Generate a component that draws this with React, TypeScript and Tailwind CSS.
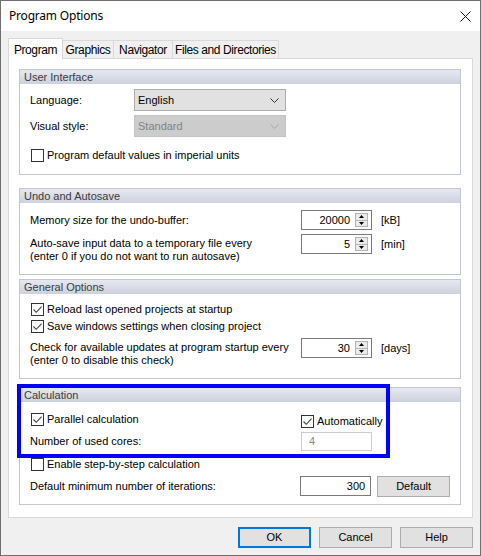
import React from "react";

function Check({ checked }: { checked?: boolean }) {
  return (
    <span className="w-[13px] h-[13px] border border-[#333333] bg-white flex items-center justify-center shrink-0">
      {checked && (
        <svg width="11" height="11" viewBox="0 0 11 11">
          <path d="M1.5 5.5L4.2 8.3L9.6 2.6" stroke="#444444" strokeWidth="1.1" fill="none" />
        </svg>
      )}
    </span>
  );
}

function CheckRow({ checked, label, className = "" }: { checked?: boolean; label: string; className?: string }) {
  return (
    <div className={"flex items-center gap-[3px] h-[13px] ml-px " + className}>
      <Check checked={checked} />
      <span className="leading-[13px] whitespace-nowrap">{label}</span>
    </div>
  );
}

function Spin({ value }: { value: string }) {
  return (
    <div className="w-[71px] h-[20px] border border-[#7a7a7a] bg-white flex items-center shrink-0">
      <span className="flex-1 text-right pr-[5px]">{value}</span>
      <div className="w-[13px] h-[14px] mr-[3px] flex flex-col">
        <div className="flex-1 border border-[#b5b5b5] bg-[#ebebeb] flex items-center justify-center">
          <svg width="5" height="3" viewBox="0 0 5 3">
            <path d="M0 3L2.5 0L5 3Z" fill="#000" />
          </svg>
        </div>
        <div className="flex-1 border border-t-0 border-[#b5b5b5] bg-[#ebebeb] flex items-center justify-center">
          <svg width="5" height="3" viewBox="0 0 5 3">
            <path d="M0 0L2.5 3L5 0Z" fill="#000" />
          </svg>
        </div>
      </div>
    </div>
  );
}

function Chevron({ color }: { color: string }) {
  return (
    <svg width="9" height="5" viewBox="0 0 9 5">
      <path d="M0.5 0.5L4.5 4.5L8.5 0.5" stroke={color} strokeWidth="1" fill="none" />
    </svg>
  );
}

function Group({ title, className = "", children }: { title: string; className?: string; children: React.ReactNode }) {
  return (
    <div className={"border border-[#c3c7d3] flex flex-col shrink-0 " + className}>
      <div className="h-[14px] bg-linear-to-b from-[#e6e9f1] to-[#cdd1de] pl-[4px] leading-[14px] text-[#3a3a3a]">
        {title}
      </div>
      <div className="flex-1 pl-[10px] pr-[10px] flex flex-col">{children}</div>
    </div>
  );
}

export default function App() {
  return (
    <div className="w-[481px] h-[556px] border border-[#6f6f6f] bg-[#f0f0f0] flex flex-col relative text-[11px] text-black font-['Liberation_Sans',Arial,sans-serif]">
      {/* Title bar */}
      <div className="h-[30px] bg-white flex items-center justify-between pl-[8px] pr-[9px] shrink-0">
        <span className="font-['Noto_Sans',sans-serif] text-[12px] tracking-[-0.2px] text-black">Program Options</span>
        <svg width="11" height="11" viewBox="0 0 11 11">
          <path d="M0.5 0.5L10.5 10.5M10.5 0.5L0.5 10.5" stroke="#111" strokeWidth="1" />
        </svg>
      </div>

      {/* Tabs */}
      <div className="flex pl-[7px] mt-[7px] h-[20px] items-end shrink-0 text-[12px] tracking-[-0.4px]">
        <div className="w-[55px] h-[21px] -mb-px relative z-10 bg-white border border-b-0 border-[#d9d9d9] flex items-start justify-center pt-[2px]">
          Program
        </div>
        <div className="w-[51px] h-[18px] bg-[#f0f0f0] border border-l-0 border-b-0 border-[#d9d9d9] flex items-center justify-center">
          Graphics
        </div>
        <div className="w-[59px] h-[18px] bg-[#f0f0f0] border border-l-0 border-b-0 border-[#d9d9d9] flex items-center justify-center">
          Navigator
        </div>
        <div className="w-[106px] h-[18px] bg-[#f0f0f0] border border-l-0 border-b-0 border-[#d9d9d9] flex items-center justify-center">
          Files and Directories
        </div>
      </div>

      {/* Panel */}
      <div className="mx-[7px] h-[460px] border border-[#d9d9d9] bg-white flex flex-col pl-[10px] pr-[11px] pt-[10px] shrink-0">
        <Group title="User Interface" className="h-[106px]">
          <div className="flex items-center h-[22px] mt-[5px]">
            <span className="w-[104px]">Language:</span>
            <div className="w-[152px] h-[22px] border border-[#adadad] bg-[#e1e1e1] flex items-center justify-between pl-[3px] pr-[6px]">
              <span>English</span>
              <Chevron color="#333" />
            </div>
          </div>
          <div className="flex items-center h-[22px] mt-[4px]">
            <span className="w-[104px]">Visual style:</span>
            <div className="w-[152px] h-[22px] border border-[#c4c4c4] bg-[#cccccc] flex items-center justify-between pl-[3px] pr-[6px] text-[#838383]">
              <span>Standard</span>
              <Chevron color="#a8a8a8" />
            </div>
          </div>
          <CheckRow label="Program default values in imperial units" className="mt-[12px]" />
        </Group>

        <Group title="Undo and Autosave" className="h-[87px] mt-[13px]">
          <div className="flex items-center h-[20px] mt-[7px]">
            <span className="w-[271px]">Memory size for the undo-buffer:</span>
            <Spin value="20000" />
            <span className="ml-[9px]">[kB]</span>
          </div>
          <div className="flex items-start mt-[4px]">
            <span className="w-[271px] leading-[13px] pt-[3px]">
              Auto-save input data to a temporary file every
              <br />
              (enter 0 if you do not want to run autosave)
            </span>
            <Spin value="5" />
            <span className="ml-[9px] h-[20px] flex items-center">[min]</span>
          </div>
        </Group>

        <Group title="General Options" className="h-[100px] mt-[4px]">
          <CheckRow checked label="Reload last opened projects at startup" className="mt-[9px]" />
          <CheckRow checked label="Save windows settings when closing project" className="mt-[4px]" />
          <div className="flex items-start mt-[5px]">
            <span className="w-[271px] leading-[13px] pt-[3px]">
              Check for available updates at program startup every
              <br />
              (enter 0 to disable this check)
            </span>
            <Spin value="30" />
            <span className="ml-[9px] h-[20px] flex items-center">[days]</span>
          </div>
        </Group>

        <Group title="Calculation" className="h-[118px] mt-[8px]">
          <div className="flex items-start h-[15px] mt-[11px]">
            <div className="w-[271px]">
              <CheckRow checked label="Parallel calculation" />
            </div>
            <div className="mt-[2px] flex items-center gap-[3px] h-[13px]">
              <Check checked />
              <span className="leading-[13px]">Automatically</span>
            </div>
          </div>
          <div className="flex items-center h-[19px] mt-[4px]">
            <span className="w-[271px]">Number of used cores:</span>
            <div className="w-[71px] h-[19px] border border-[#cccccc] bg-white flex items-center pl-[7px] text-[#8a8a8a]">
              4
            </div>
          </div>
          <CheckRow label="Enable step-by-step calculation" className="mt-[7px]" />
          <div className="flex items-center h-[20px] mt-[5px]">
            <span className="w-[271px]">Default minimum number of iterations:</span>
            <div className="w-[71px] h-[20px] border border-[#7a7a7a] bg-white flex items-center justify-end pr-[5px]">
              300
            </div>
            <div className="ml-[6px] w-[73px] h-[21px] border border-[#adadad] bg-[#e1e1e1] flex items-center justify-center">
              Default
            </div>
          </div>
        </Group>
      </div>

      {/* Buttons */}
      <div className="flex justify-end gap-[8px] pr-[7px] mt-[9px]">
        <div className="w-[73px] h-[21px] border-2 border-[#0078d7] bg-[#e1e1e1] flex items-center justify-center">OK</div>
        <div className="w-[73px] h-[21px] border border-[#adadad] bg-[#e1e1e1] flex items-center justify-center">Cancel</div>
        <div className="w-[73px] h-[21px] border border-[#adadad] bg-[#e1e1e1] flex items-center justify-center">Help</div>
      </div>

      {/* Annotation highlight */}
      <div className="absolute left-[16px] top-[383px] w-[373px] h-[74px] border-4 border-[#0000ff] pointer-events-none" />
    </div>
  );
}
